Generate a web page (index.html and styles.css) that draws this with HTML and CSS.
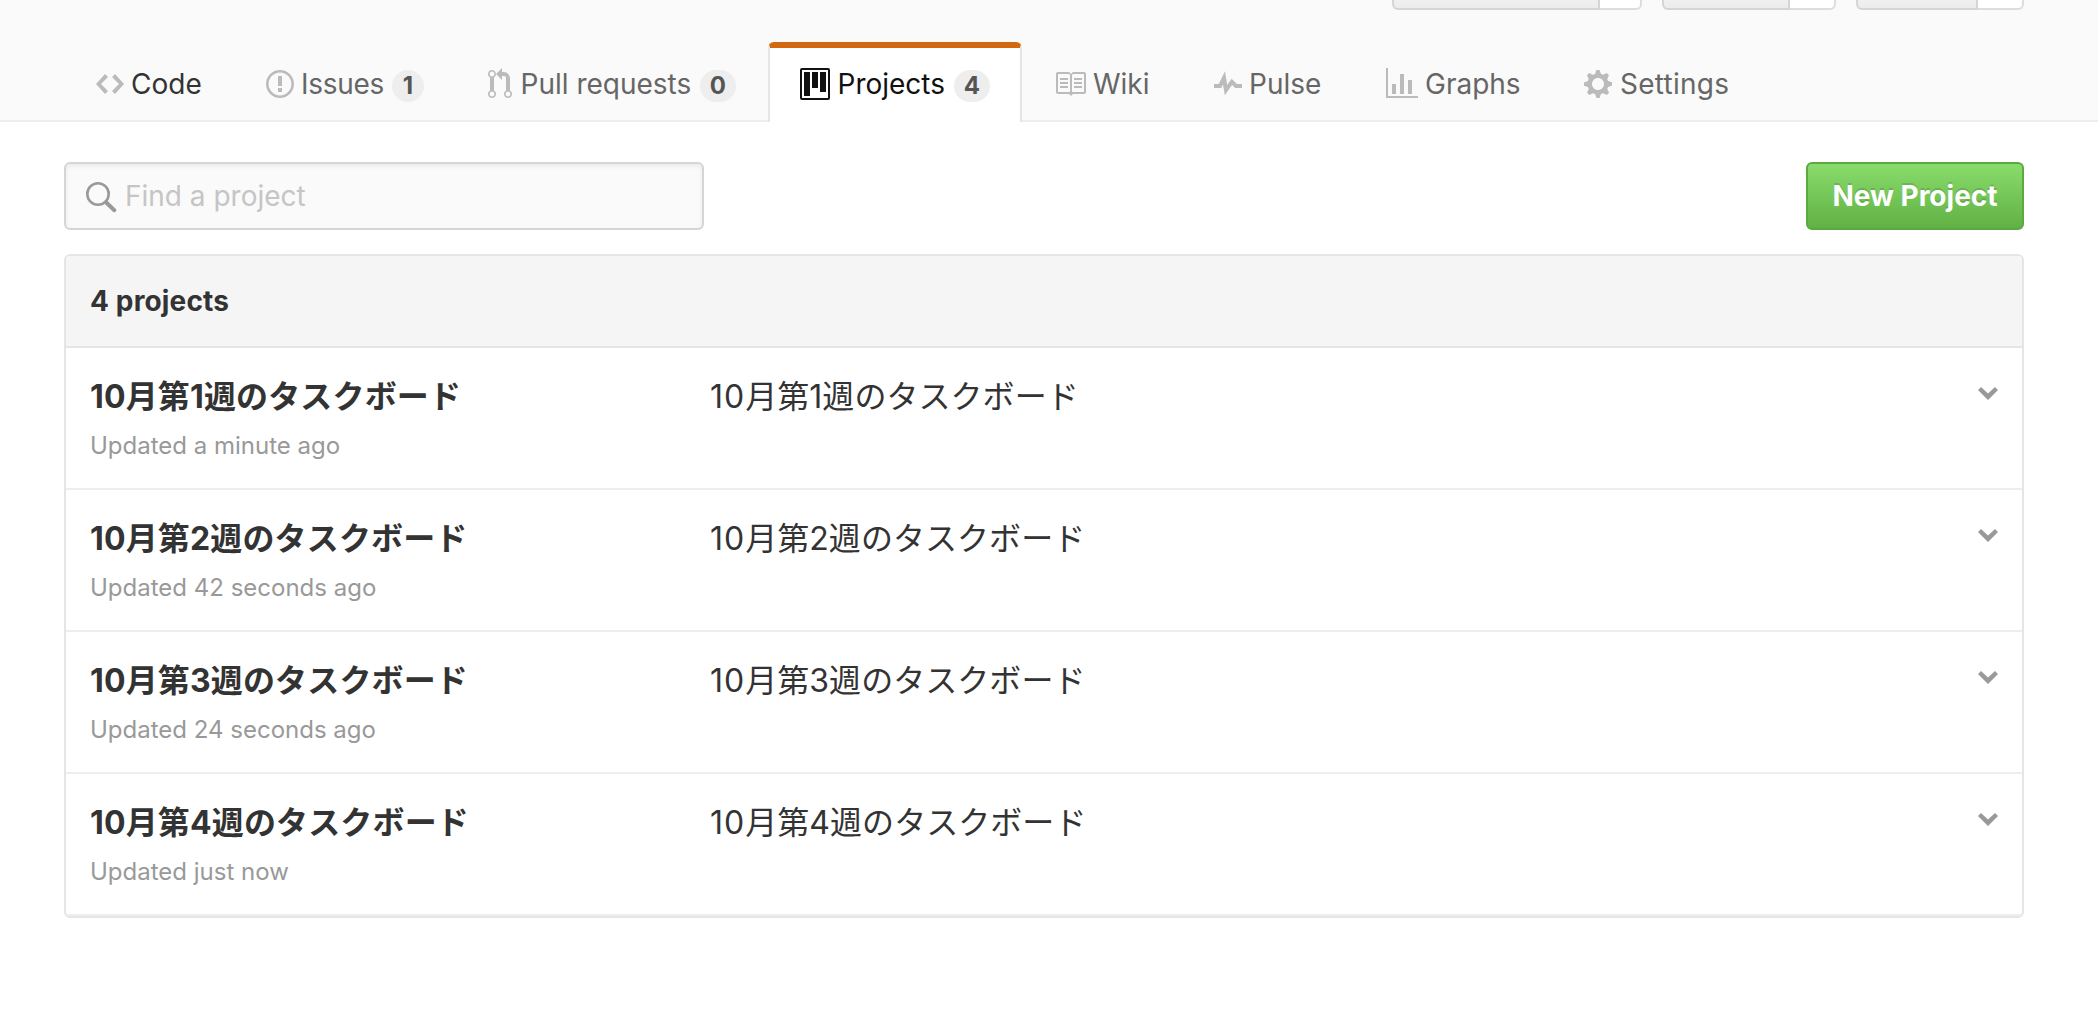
FILE: index.html
```
<!DOCTYPE html>
<html lang="ja">
<head>
<meta charset="utf-8">
<title>Projects</title>
<link rel="stylesheet" href="styles.css">
</head>
<body>
<header class="repohead">
  <div class="container">
    <div class="actions">
      <div class="action action-watch"><span class="action-button"></span><span class="action-count"></span></div>
      <div class="action action-star"><span class="action-button"></span><span class="action-count"></span></div>
      <div class="action action-fork"><span class="action-button"></span><span class="action-count"></span></div>
    </div>
    <nav class="tabs">
      <a class="tab tab-code"><svg class="icon" width="28" height="32" viewBox="0 0 14 16"><path d="M9.5 3L8 4.5 11.5 8 8 11.5 9.5 13 14 8 9.5 3zm-5 0L0 8l4.5 5L6 11.5 2.5 8 6 4.5 4.5 3z"/></svg><span>Code</span></a>
      <a class="tab tab-issues"><svg class="icon" width="28" height="32" viewBox="0 0 14 16"><path d="M7 2.3c3.14 0 5.7 2.56 5.7 5.7s-2.56 5.7-5.7 5.7A5.71 5.71 0 0 1 1.3 8c0-3.14 2.56-5.7 5.7-5.7zM7 1C3.14 1 0 4.14 0 8s3.14 7 7 7 7-3.14 7-7-3.14-7-7-7zm1 3H6v5h2V4zm0 6H6v2h2v-2z"/></svg><span>Issues</span><span class="counter">1</span></a>
      <a class="tab tab-pulls"><svg class="icon" width="24" height="32" viewBox="0 0 12 16"><path d="M11 11.28V5c-.03-.78-.34-1.47-.94-2.06C9.46 2.35 8.78 2.03 8 2H7V0L4 3l3 3V4h1c.27.02.48.11.69.31.21.2.3.42.31.69v6.28A1.993 1.993 0 0 0 10 15a1.993 1.993 0 0 0 1-3.72zm-1 2.92c-.66 0-1.2-.55-1.2-1.2 0-.65.55-1.2 1.2-1.2.65 0 1.2.55 1.2 1.2 0 .65-.55 1.2-1.2 1.2zM4 3c0-1.11-.89-2-2-2a1.993 1.993 0 0 0-1 3.72v6.56A1.993 1.993 0 0 0 2 15a1.993 1.993 0 0 0 1-3.72V4.72c.59-.34 1-.98 1-1.72zm-.8 10c0 .66-.55 1.2-1.2 1.2-.65 0-1.2-.55-1.2-1.2 0-.65.55-1.2 1.2-1.2.65 0 1.2.55 1.2 1.2zM2 4.2C1.34 4.2.8 3.65.8 3c0-.65.55-1.2 1.2-1.2.65 0 1.2.55 1.2 1.2 0 .65-.55 1.2-1.2 1.2z"/></svg><span>Pull requests</span><span class="counter">0</span></a>
      <a class="tab tab-projects selected"><svg class="icon" width="30" height="32" viewBox="0 0 15 16"><path fill-rule="evenodd" d="M10 12h3V2h-3v10zm-4-2h3V2H6v8zm-4 4h3V2H2v12zm-1 1h13V1H1v14zM14 0H1a1 1 0 0 0-1 1v14a1 1 0 0 0 1 1h13a1 1 0 0 0 1-1V1a1 1 0 0 0-1-1z"/></svg><span>Projects</span><span class="counter">4</span></a>
      <a class="tab tab-wiki"><svg class="icon" width="32" height="32" viewBox="0 0 16 16"><path d="M3 5h4v1H3V5zm0 3h4V7H3v1zm0 2h4V9H3v1zm11-5h-4v1h4V5zm0 2h-4v1h4V7zm0 2h-4v1h4V9zm2-6v9c0 .55-.45 1-1 1H9.5l-1 1-1-1H2c-.55 0-1-.45-1-1V3c0-.55.45-1 1-1h5.5l1 1 1-1H15c.55 0 1 .45 1 1zm-8 .5L7.5 3H2v9h6V3.5zm7-.5H9.5l-.5.5V12h6V3z"/></svg><span>Wiki</span></a>
      <a class="tab tab-pulse"><svg class="icon" width="28" height="32" viewBox="0 0 14 16"><path d="M11.5 8L8.8 5.4 6.6 8.5 5.5 1.6 2.38 8H0v2h3.6l.9-1.8.9 5.4L9 8.5l1.6 1.5H14V8z"/></svg><span>Pulse</span></a>
      <a class="tab tab-graphs"><svg class="icon" width="32" height="32" viewBox="0 0 16 16"><path d="M16 14v1H0V0h1v14h15zM5 13H3V8h2v5zm4 0H7V3h2v10zm4 0h-2V6h2v7z"/></svg><span>Graphs</span></a>
      <a class="tab tab-settings"><svg class="icon" width="28" height="32" viewBox="0 0 14 16"><path d="M14 8.77v-1.6l-1.94-.64-.45-1.09.88-1.84-1.13-1.13-1.81.91-1.09-.45-.69-1.92h-1.6l-.63 1.94-1.11.45-1.84-.88-1.13 1.13.91 1.81-.45 1.09L0 7.23v1.59l1.94.64.45 1.09-.88 1.84 1.13 1.13 1.81-.91 1.09.45.69 1.92h1.59l.63-1.94 1.11-.45 1.84.88 1.13-1.13-.92-1.81.47-1.09L14 8.75v.02zM7 11c-1.66 0-3-1.34-3-3s1.34-3 3-3 3 1.34 3 3-1.34 3-3 3z"/></svg><span>Settings</span></a>
    </nav>
  </div>
</header>
<main class="container">
  <div class="toolbar">
    <label class="search">
      <svg class="search-icon" width="32" height="32" viewBox="0 0 32 32"><circle cx="13" cy="13" r="10.7"/><path d="M21 21.2l8.3 8"/></svg>
      <input class="search-input" type="text" placeholder="Find a project">
    </label>
    <button class="button-primary">New Project</button>
  </div>
  <section class="panel">
    <h2 class="panel-header">4 projects</h2>
    <article class="row">
      <div class="summary"><h3 class="title">10月第1週のタスクボード</h3><p class="updated">Updated a minute ago</p></div>
      <p class="description"><span class="month">10</span>月第1週のタスクボード</p>
      <svg class="chevron" width="20" height="32" viewBox="0 0 10 16"><path d="M5 11L0 6l1.5-1.5L5 7.75 8.5 4.5 10 6l-5 5z"/></svg>
    </article>
    <article class="row">
      <div class="summary"><h3 class="title">10月第2週のタスクボード</h3><p class="updated">Updated 42 seconds ago</p></div>
      <p class="description"><span class="month">10</span>月第2週のタスクボード</p>
      <svg class="chevron" width="20" height="32" viewBox="0 0 10 16"><path d="M5 11L0 6l1.5-1.5L5 7.75 8.5 4.5 10 6l-5 5z"/></svg>
    </article>
    <article class="row">
      <div class="summary"><h3 class="title">10月第3週のタスクボード</h3><p class="updated">Updated 24 seconds ago</p></div>
      <p class="description"><span class="month">10</span>月第3週のタスクボード</p>
      <svg class="chevron" width="20" height="32" viewBox="0 0 10 16"><path d="M5 11L0 6l1.5-1.5L5 7.75 8.5 4.5 10 6l-5 5z"/></svg>
    </article>
    <article class="row">
      <div class="summary"><h3 class="title">10月第4週のタスクボード</h3><p class="updated">Updated just now</p></div>
      <p class="description"><span class="month">10</span>月第4週のタスクボード</p>
      <svg class="chevron" width="20" height="32" viewBox="0 0 10 16"><path d="M5 11L0 6l1.5-1.5L5 7.75 8.5 4.5 10 6l-5 5z"/></svg>
    </article>
  </section>
</main>
</body>
</html>
```
FILE: styles.css
```
* { box-sizing: border-box; }

body {
  margin: 0;
  background: #fff;
  color: #333;
  font: 28px/42px Inter, "Noto Sans CJK JP", sans-serif;
}

h2, h3, p { margin: 0; }

.container { width: 1960px; margin-left: 64px; }

/* Repository header */
.repohead { background: #fafafa; border-bottom: 2px solid #eee; }

.actions { display: flex; justify-content: flex-end; gap: 20px; height: 42px; }
.action { display: flex; height: 10px; }
.action-watch { width: 250px; }
.action-star { width: 174px; }
.action-fork { width: 168px; }
.action-button {
  flex: 1;
  border: solid #d5d5d5;
  border-width: 0 2px 2px;
  border-radius: 0 0 0 6px;
  background: linear-gradient(#f0f0f0, #ececec);
}
.action-count {
  width: 42px;
  border: solid #ddd;
  border-width: 0 2px 2px 0;
  border-radius: 0 0 6px 0;
  background: #fff;
}
.action-fork .action-count { width: 46px; }
.action-star .action-count { width: 46px; }

.tabs { display: flex; margin-bottom: -2px; }
.tab {
  display: flex;
  align-items: center;
  gap: 7px;
  height: 80px;
  padding: 0 30px 2px;
  border: 2px solid transparent;
  border-width: 6px 2px 0;
  border-radius: 6px 6px 0 0;
  color: #666;
  white-space: nowrap;
}
.tab-code { width: 170px; color: #333; }
.tab-issues { width: 222px; letter-spacing: -0.3px; }
.tab-pulls { width: 312px; gap: 8.5px; }
.tab-projects { width: 254px; gap: 7.5px; }
.tab-wiki { width: 160px; }
.tab-pulse { width: 172px; }
.tab-graphs { width: 198px; }
.tab-settings { gap: 8px; letter-spacing: 0.25px; }
.tab.selected {
  border-color: #d26911 #e5e5e5 transparent;
  background: #fff;
  color: #111;
}
.icon { flex: none; fill: #bbb; }
.selected .icon { fill: #111; }
.counter {
  min-width: 32px;
  height: 32px;
  margin: 4px 0 0 auto;
  padding: 0 10px;
  border-radius: 20px;
  background: #eee;
  color: #555;
  font-size: 24px;
  font-weight: 700;
  line-height: 32px;
  letter-spacing: 0;
  text-align: center;
}

/* Search and new project */
.toolbar {
  display: flex;
  justify-content: space-between;
  padding: 40px 0 24px;
}
.search {
  display: flex;
  align-items: center;
  gap: 8px;
  width: 640px;
  height: 68px;
  padding: 0 19px;
  border: 2px solid #d5d5d5;
  border-radius: 6px;
  background: #fafafa;
  box-shadow: inset 0 2px 4px rgba(0, 0, 0, 0.075);
}
.search-icon { flex: none; margin-top: 2px; fill: none; stroke: #999; stroke-width: 2.6; stroke-linecap: round; }
.search-icon path { stroke-width: 4; }
.search-input {
  flex: 1;
  min-width: 0;
  padding: 0;
  border: 0;
  outline: 0;
  background: none;
  color: #333;
  font: inherit;
}
.search-input::placeholder { color: #c5c5c5; opacity: 1; }
.button-primary {
  width: 218px;
  height: 68px;
  padding: 0;
  border: 2px solid #5ca941;
  border-radius: 6px;
  background: linear-gradient(#8add6d, #60b044) border-box;
  color: #fff;
  font: inherit;
  font-weight: 700;
  text-shadow: 0 -2px 0 rgba(0, 0, 0, 0.15);
}

/* Project list */
.panel { border: 2px solid #e5e5e5; border-radius: 6px; overflow: hidden; }
.panel-header {
  height: 92px;
  padding: 0 24px;
  border-bottom: 2px solid #e5e5e5;
  background: #f5f5f5;
  font-size: 28px;
  font-weight: 700;
  line-height: 91px;
  letter-spacing: 0.15px;
}
.row {
  display: flex;
  align-items: flex-start;
  height: 142px;
  padding: 25px 24px 0;
  border-bottom: 2px solid #eee;
}
.summary { width: 620px; }
.title { font-size: 32px; font-weight: 700; line-height: 48px; letter-spacing: 0.15px; }
.updated { margin-top: 7px; color: #999; font-size: 24px; line-height: 36px; }
.description { flex: 1; font-size: 32px; line-height: 48px; letter-spacing: 0.05px; }
.month { letter-spacing: 1px; }
.chevron { margin-top: 5px; fill: #999; }
```
